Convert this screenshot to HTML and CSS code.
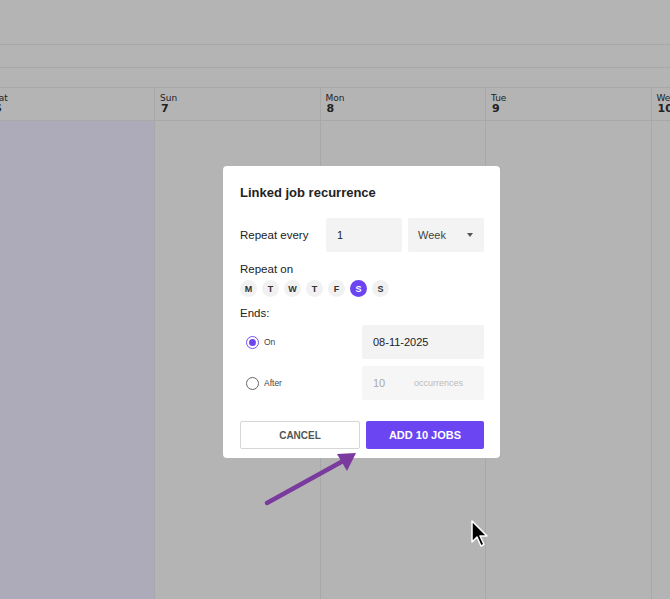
FILE: index.html
```html
<!DOCTYPE html>
<html lang="en">
<head>
    <meta charset="UTF-8">
    <meta name="viewport" content="width=device-width, initial-scale=1.0">
    <title>Schedule - week view</title>
    <link rel="stylesheet" href="styles.css">
</head>
<body>
    <div class="calendar">
        <div class="toolbar"></div>
        <div class="strip"></div>
        <div class="strip strip-thin"></div>

        <div class="week">
            <div class="day day-sat">
                <div class="day-head"><span class="dow">Sat</span><span class="num">6</span></div>
                <div class="day-body"></div>
            </div>
            <div class="day">
                <div class="day-head"><span class="dow">Sun</span><span class="num">7</span></div>
                <div class="day-body"></div>
            </div>
            <div class="day">
                <div class="day-head"><span class="dow">Mon</span><span class="num">8</span></div>
                <div class="day-body"></div>
            </div>
            <div class="day">
                <div class="day-head"><span class="dow">Tue</span><span class="num">9</span></div>
                <div class="day-body"></div>
            </div>
            <div class="day">
                <div class="day-head"><span class="dow">Wed</span><span class="num">10</span></div>
                <div class="day-body"></div>
            </div>
        </div>
    </div>

    <!-- recurrence dialog -->
    <div class="dialog">
        <h1 class="dialog-title">Linked job recurrence</h1>

        <div class="row">
            <label class="row-label">Repeat every</label>
            <div class="field field-num">1</div>
            <div class="field field-select">
                <span>Week</span>
                <span class="caret"></span>
            </div>
        </div>

        <div class="section-label">Repeat on</div>
        <div class="days">
            <span class="dot">M</span>
            <span class="dot">T</span>
            <span class="dot">W</span>
            <span class="dot">T</span>
            <span class="dot">F</span>
            <span class="dot dot-on">S</span>
            <span class="dot">S</span>
        </div>

        <div class="section-label ends">Ends:</div>
        <div class="end-row">
            <span class="radio radio-on"></span>
            <span class="radio-label">On</span>
            <div class="field field-wide">08-11-2025</div>
        </div>
        <div class="end-row">
            <span class="radio"></span>
            <span class="radio-label">After</span>
            <div class="field field-wide field-muted">
                <span class="count">10</span>
                <span class="unit">occurrences</span>
            </div>
        </div>

        <div class="actions">
            <button class="btn btn-cancel">CANCEL</button>
            <button class="btn btn-primary">ADD 10 JOBS</button>
        </div>
    </div>

    <!-- annotation arrow -->
    <svg class="arrow" width="670" height="599" viewBox="0 0 670 599">
        <line x1="267" y1="503" x2="343" y2="461" stroke="#7a3a9e" stroke-width="4.5" stroke-linecap="round"/>
        <polygon points="356,453 337,454 347,471" fill="#7a3a9e"/>
    </svg>

    <!-- mouse pointer -->
    <svg class="pointer" width="20" height="30" viewBox="0 0 20 30">
        <path d="M2 1 L2 22 L7 17 L11 26 L14 24.5 L10 16 L17 16 Z" fill="#000" stroke="#fff" stroke-width="1.5" stroke-linejoin="round"/>
    </svg>
</body>
</html>
```

FILE: styles.css
```css
body {
    margin: 0;
    width: 670px;
    height: 599px;
    overflow: hidden;
    background-color: #b4b4b4;
    font-family: "Liberation Sans", Arial, sans-serif;
    color: #222;
}
.calendar {
    display: flex;
    flex-direction: column;
    height: 599px;
}
.toolbar {
    height: 44px;
    border-bottom: 1px solid #a8a8a8;
}
.strip {
    height: 22px;
    border-bottom: 1px solid #a8a8a8;
}
.strip-thin {
    height: 19px;
}
.week {
    flex: 1;
    display: flex;
    margin-left: -12px;
}
.day {
    width: 165.5px;
    flex-shrink: 0;
    display: flex;
    flex-direction: column;
    border-right: 1px solid #a8a8a8;
    box-sizing: border-box;
}
.day:first-child {
    width: 167px;
}
.day-head {
    height: 33px;
    border-bottom: 1px solid #a8a8a8;
    padding: 5px 0 0 5px;
    box-sizing: border-box;
    display: flex;
    flex-direction: column;
    font-family: "DejaVu Sans", sans-serif;
}
.dow {
    font-size: 9px;
    line-height: 10px;
}
.num {
    font-size: 11px;
    font-weight: bold;
    line-height: 11px;
    padding-left: 1px;
}
.day-body {
    flex: 1;
}
.day-sat .day-body {
    background-color: #adabb9;
}

/* dialog */
.dialog {
    position: absolute;
    left: 223px;
    top: 166px;
    width: 277px;
    height: 292px;
    box-sizing: border-box;
    background-color: #fff;
    border-radius: 4px;
    padding: 19px 16px 0 17px;
}
.dialog-title {
    margin: 0 0 17px;
    font-size: 13px;
    font-weight: bold;
    line-height: 16px;
    color: #222;
}
.row {
    display: flex;
    align-items: center;
    gap: 6px;
    height: 34px;
}
.row-label {
    width: 80px;
    font-size: 11.5px;
    color: #222;
}
.field {
    background-color: #f3f3f3;
    border-radius: 2px;
    height: 34px;
    box-sizing: border-box;
    display: flex;
    align-items: center;
    font-size: 11px;
    color: #222;
}
.field-num {
    width: 76px;
    padding-left: 11px;
}
.field-select {
    width: 76px;
    padding: 0 11px 0 10px;
    justify-content: space-between;
    color: #444;
}
.caret {
    width: 0;
    height: 0;
    border-left: 3.5px solid transparent;
    border-right: 3.5px solid transparent;
    border-top: 4px solid #555;
}
.section-label {
    margin-top: 11px;
    font-size: 11.5px;
    line-height: 13px;
    color: #222;
}
.days {
    display: flex;
    gap: 5px;
    margin-top: 4px;
}
.dot {
    width: 17px;
    height: 17px;
    border-radius: 50%;
    background-color: #f1f1f1;
    display: flex;
    align-items: center;
    justify-content: center;
    font-size: 9px;
    font-weight: bold;
    color: #333;
}
.dot-on {
    background-color: #6c45f3;
    color: #fff;
}
.ends {
    margin-top: 10px;
}
.end-row {
    display: flex;
    align-items: center;
    height: 34px;
    margin-top: 5px;
}
.end-row + .end-row {
    margin-top: 7px;
}
.radio {
    width: 11px;
    height: 11px;
    border: 1.5px solid #666;
    border-radius: 50%;
    margin-left: 6px;
    position: relative;
}
.radio-on {
    border-color: #7150f0;
}
.radio-on::after {
    content: "";
    position: absolute;
    left: 2px;
    top: 2px;
    width: 7px;
    height: 7px;
    border-radius: 50%;
    background-color: #6c45f3;
}
.radio-label {
    font-size: 8.5px;
    color: #444;
    margin-left: 5px;
    flex: 1;
}
.field-wide {
    width: 122px;
    padding-left: 11px;
}
.field-muted {
    background-color: #f6f6f6;
}
.count {
    color: #aaa;
    width: 41px;
}
.unit {
    font-size: 9px;
    color: #bbb;
}
.actions {
    display: flex;
    gap: 6px;
    margin-top: 21px;
}
.btn {
    height: 28px;
    border-radius: 2px;
    font-family: "Liberation Sans", Arial, sans-serif;
    font-size: 10px;
    font-weight: bold;
    cursor: pointer;
}
.btn-cancel {
    width: 120px;
    background-color: #fff;
    border: 1px solid #d6d6d6;
    color: #555;
}
.btn-primary {
    width: 118px;
    background-color: #6b45f2;
    border: none;
    color: #fff;
    font-size: 11px;
}

.arrow {
    position: absolute;
    left: 0;
    top: 0;
}
.pointer {
    position: absolute;
    left: 470px;
    top: 520px;
}
```
